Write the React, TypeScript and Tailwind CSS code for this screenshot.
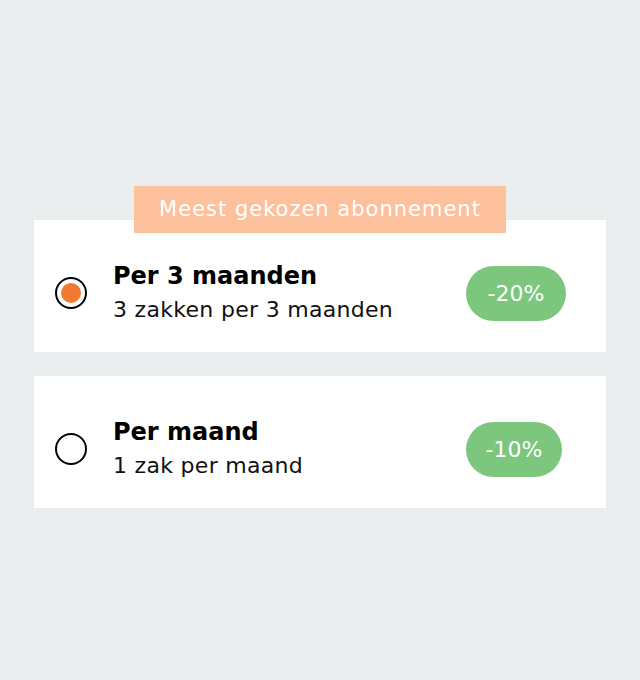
const plans = [
  { id: '3m', title: 'Per 3 maanden', sub: '3 zakken per 3 maanden', discount: '-20%', selected: true, popular: true },
  { id: '1m', title: 'Per maand', sub: '1 zak per maand', discount: '-10%', selected: false, popular: false },
]

function Radio({ checked }: { checked: boolean }) {
  return (
    <span className="flex h-8 w-8 shrink-0 items-center justify-center rounded-full border-2 border-black bg-white">
      {checked && <span className="h-5 w-5 rounded-full bg-[#f07a30]" />}
    </span>
  )
}

export default function App() {
  return (
    <div
      className="min-h-[680px] bg-[#e9edee] px-[34px] pt-[220px]"
      style={{ fontFamily: '"DejaVu Sans", "Liberation Sans", sans-serif' }}
    >
      <div className="flex flex-col gap-6">
        {plans.map((p) => (
          <div key={p.id} className="relative flex h-[132px] items-center bg-white pl-[21px] pr-10 pt-[14px]">
            {p.popular && (
              <div className="absolute left-[100px] top-[-34px] flex h-[47px] w-[372px] items-center justify-center bg-[#fdc09c] text-[21px] tracking-[1px] text-white">
                Meest gekozen abonnement
              </div>
            )}
            <Radio checked={p.selected} />
            <div className="ml-[26px] flex flex-1 flex-col">
              <span className="text-[24px] font-bold leading-[34px] text-black">{p.title}</span>
              <span className="text-[22px] leading-[34px] tracking-[0.3px] text-[#111]">{p.sub}</span>
            </div>
            <span
              className={`flex h-[55px] items-center justify-center rounded-full bg-[#7cc67e] text-[22px] text-white ${
                p.popular ? 'w-[100px]' : 'mr-1 w-[96px]'
              }`}
            >
              {p.discount}
            </span>
          </div>
        ))}
      </div>
    </div>
  )
}
